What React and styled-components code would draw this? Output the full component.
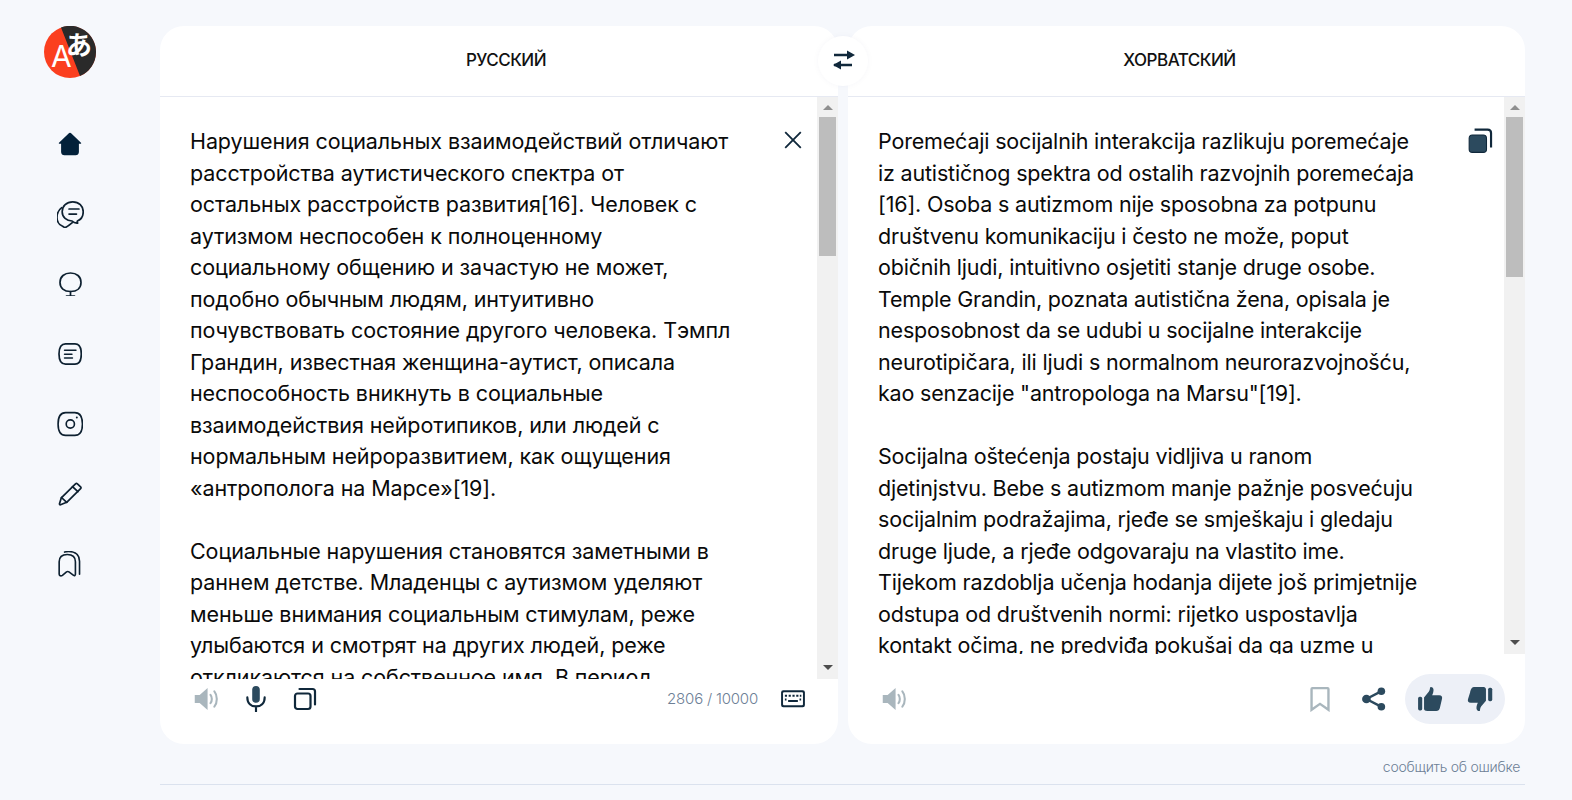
import styled, { createGlobalStyle } from "styled-components";

const NAVY = "#10283b";
const SLATE = "#2c4a5e";
const MUTED = "#a9b6bd";

const GlobalStyle = createGlobalStyle`
  html, body {
    margin: 0;
    height: 100%;
    background: #f6f8fc;
  }
  body {
    font-family: "Inter", "Noto Sans", sans-serif;
    color: #0a0a0a;
  }
`;

const SOURCE_TEXT = [
  [
    "Нарушения социальных взаимодействий отличают",
    "расстройства аутистического спектра от",
    "остальных расстройств развития[16]. Человек с",
    "аутизмом неспособен к полноценному",
    "социальному общению и зачастую не может,",
    "подобно обычным людям, интуитивно",
    "почувствовать состояние другого человека. Тэмпл",
    "Грандин, известная женщина-аутист, описала",
    "неспособность вникнуть в социальные",
    "взаимодействия нейротипиков, или людей с",
    "нормальным нейроразвитием, как ощущения",
    "«антрополога на Марсе»[19].",
  ],
  [
    "Социальные нарушения становятся заметными в",
    "раннем детстве. Младенцы с аутизмом уделяют",
    "меньше внимания социальным стимулам, реже",
    "улыбаются и смотрят на других людей, реже",
    "откликаются на собственное имя. В период",
  ],
];

const TARGET_TEXT = [
  [
    "Poremećaji socijalnih interakcija razlikuju poremećaje",
    "iz autističnog spektra od ostalih razvojnih poremećaja",
    "[16]. Osoba s autizmom nije sposobna za potpunu",
    "društvenu komunikaciju i često ne može, poput",
    "običnih ljudi, intuitivno osjetiti stanje druge osobe.",
    "Temple Grandin, poznata autistična žena, opisala je",
    "nesposobnost da se udubi u socijalne interakcije",
    "neurotipičara, ili ljudi s normalnom neurorazvojnošću,",
    'kao senzacije "antropologa na Marsu"[19].',
  ],
  [
    "Socijalna oštećenja postaju vidljiva u ranom",
    "djetinjstvu. Bebe s autizmom manje pažnje posvećuju",
    "socijalnim podražajima, rjeđe se smješkaju i gledaju",
    "druge ljude, a rjeđe odgovaraju na vlastito ime.",
    "Tijekom razdoblja učenja hodanja dijete još primjetnije",
    "odstupa od društvenih normi: rijetko uspostavlja",
    "kontakt očima, ne predviđa pokušaj da ga uzme u",
  ],
];

const Svg = ({ size = 24, children, ...rest }) => (
  <svg width={size} height={size} viewBox="0 0 24 24" fill="none" {...rest}>
    {children}
  </svg>
);

const line = { stroke: "#0d2030", strokeWidth: 1.7, strokeLinecap: "round", strokeLinejoin: "round" };

const Logo = () => (
  <svg width="52" height="52" viewBox="0 0 52 52">
    <circle cx="26" cy="26" r="26" fill="#fb3f1f" />
    <path d="M17 1.500A26 26 0 0 1 52 26A26 26 0 0 1 36 50Z" fill="#2a2a2a" />
    <text x="7" y="41" fontFamily="Inter" fontSize="30" fill="#fff">A</text>
    <text x="22" y="29" fontFamily="'Noto Sans CJK JP'" fontSize="26" fontWeight="700" fill="#fff">あ</text>
  </svg>
);

const HomeIcon = () => (
  <Svg>
    <path d="M12 .8c.5 0 1 .2 1.400.6l9.600 9.300c.4.4.1 1-.4 1h-1.700v8.200c0 2-1.400 3.300-3.300 3.300H6.400c-1.900 0-3.300-1.300-3.300-3.300v-8.200H1.400c-.5 0-.8-.6-.4-1l9.600-9.300c.4-.4.9-.6 1.400-.6Z" fill="#03213a" />
  </Svg>
);

const ChatIcon = () => (
  <Svg size={27}>
    <path d="M14 .8c5.500 0 9.300 3.600 9.300 8.800 0 4-2.200 7-5.200 8.200-.3.7-.2 1.200.3 1.800-2 .2-3.800-.5-5-1.800C8.500 17.500 4.600 14.500 4.600 9.600 4.600 4.400 8.500.8 14 .8Z" {...line} strokeWidth="1.500" />
    <path d="M10.700 7.100h8.800M10.700 11.600h6.600" {...line} strokeWidth="1.500" />
    <path d="M4.200 5.900C1.500 7.800 0 11 0 14.800c0 3.600 2.200 6.500 5 7.700l2 1.200c2.200-.6 4.400-2.500 6.600-4.400" {...line} strokeWidth="1.500" />
  </Svg>
);

const BulbIcon = () => (
  <Svg>
    <path d="M12.500 1C18.500 1 23 4.500 23 10.500c0 5.500-4 9-10.500 9S2 16 2 10.500C2 4.500 6.500 1 12.500 1Z" {...line} />
    <path d="M12.500 19.500V24M8.500 24h8" {...line} />
  </Svg>
);

const NoteIcon = () => (
  <Svg>
    <path d="M7.500 1.800h9.500C21 1.800 23.300 5 23.300 12c0 7-2.300 10.200-6.300 10.200H7.500C3.500 22.200 1 19 1 12S3.500 1.800 7.500 1.800Z" {...line} />
    <path d="M6.500 8.200h11.500M6.500 12.200h7.500M6.500 16h8" {...line} strokeWidth="1.400" />
  </Svg>
);

const CameraIcon = () => (
  <Svg size={26}>
    <path d="M8 1.500h8.500c4.500 0 7 3.500 7 10.500s-2.500 10.500-7 10.500H8C3.500 22.500 1 19 1 12S3.500 1.500 8 1.500Z" {...line} strokeWidth="1.500" />
    <circle cx="12.300" cy="12" r="3.800" {...line} strokeWidth="1.500" />
    <circle cx="18.300" cy="6" r=".9" fill="#0d2030" />
  </Svg>
);

const PencilIcon = () => (
  <Svg>
    <path d="M17.500 1.800c.6-.5 1.300-.5 1.900 0l3.200 3c.6.6.6 1.300 0 1.900L8.700 20.300 2.500 22.800c-.6.2-1.200-.3-1-1l1.800-6L17.500 1.800Z" {...line} />
    <path d="M3.500 15.500l5.200 4.800M14.500 4.600l5.400 5" {...line} />
  </Svg>
);

const StackIcon = () => (
  <Svg size={26}>
    <path d="M3.500 23c-.7 0-1.500-.4-1.500-1.500V10C2 5.500 5 3.200 9.500 3.200S17 5.500 17 10v11.500c0 1-.8 1.500-1.700 1l-4.300-3.200c-.7-.5-1.500-.5-2.200 0l-3.800 3.200c-.4.3-.9.500-1.500.5Z" {...line} strokeWidth="1.500" />
    <path d="M7 1c1-.3 2-.5 3.500-.5 6.500 0 10.300 3.200 10.300 9v12" {...line} strokeWidth="1.500" />
  </Svg>
);

const SwapIcon = () => (
  <Svg>
    <path d="M2 7h18M2 17h18" stroke={NAVY} strokeWidth="2.400" />
    <path d="M15 2.500 23 7l-8 4.500ZM9 12.500 1 17l8 4.500Z" fill={NAVY} />
  </Svg>
);

const CloseIcon = () => (
  <Svg size={22}>
    <path d="M3.500 3.500l17 17M20.500 3.500l-17 17" stroke={NAVY} strokeWidth="2" />
  </Svg>
);

const SpeakerIcon = () => (
  <Svg size={28}>
    <path d="M1.500 8.500h4.200L12.500 2.500v19l-6.800-6H1.500Z" fill={MUTED} />
    <path d="M15 8.500c1.500 1.800 1.500 5.200 0 7M18.300 5.500c2.800 3.300 2.800 9.700 0 13" stroke={MUTED} strokeWidth="1.800" strokeLinecap="round" />
  </Svg>
);

const MicIcon = () => (
  <Svg size={26}>
    <rect x="8.500" y="0" width="7" height="15.500" rx="3.500" fill={SLATE} />
    <path d="M4 10.500c0 5.500 3.500 8.300 8 8.300s8-2.800 8-8.300M12 19v4.500" stroke={NAVY} strokeWidth="2" strokeLinecap="round" />
  </Svg>
);

const CopyIcon = () => (
  <Svg size={24}>
    <rect x="2" y="6.500" width="15.500" height="15.500" rx="2.500" stroke={NAVY} strokeWidth="2.200" />
    <path d="M6.500 2h13c1.400 0 2.500 1.100 2.500 2.500v13" stroke={NAVY} strokeWidth="2.200" strokeLinecap="round" />
  </Svg>
);

const CopyFilledIcon = () => (
  <Svg size={26}>
    <rect x="2" y="6.500" width="16" height="16" rx="3" fill={SLATE} stroke={NAVY} strokeWidth="1" />
    <path d="M7 1.500h12c1.900 0 3.200 1.300 3.200 3.200V18" stroke={NAVY} strokeWidth="2" />
  </Svg>
);

const KeyboardIcon = () => (
  <Svg size={26}>
    <rect x="1" y="4" width="22" height="15.500" rx="2" fill={NAVY} />
    <rect x="2.800" y="5.800" width="18.400" height="11.900" rx=".8" fill="#fff" />
    <path d="M4.500 9h2M8 9h2M11.500 9h2M15 9h2M18.300 9h1.400M4.500 12.500h1.500M18 12.500h1.500M7.500 13.800h9" stroke={NAVY} strokeWidth="1.800" />
  </Svg>
);

const BookmarkIcon = () => (
  <Svg size={26}>
    <path d="M5 2h14c.4 0 .8.400.8.800V22l-7.800-5.500L4.200 22V2.800c0-.4.400-.8.800-.8Z" stroke={MUTED} strokeWidth="2.200" />
  </Svg>
);

const ShareIcon = () => (
  <Svg size={26}>
    <path d="M18.500 5 5 12l13.500 7" stroke={SLATE} strokeWidth="2.200" />
    <circle cx="18.800" cy="4.800" r="3.500" fill={SLATE} />
    <circle cx="18.800" cy="19.200" r="3.500" fill={SLATE} />
    <circle cx="5" cy="12" r="4" fill={SLATE} />
  </Svg>
);

const ThumbUp = () => (
  <Svg size={26}>
    <rect x="1" y="10" width="3.800" height="12.500" rx="1.500" fill={SLATE} />
    <path d="M6.500 21V10.500l4.500-5.500c.5-1 1-2.200 1-3.500 0-1 2.800-1 3.200 1.500.3 2-.6 4-1.200 5.500h6.500c2.200 0 3.100 1.500 2.600 3.300l-2 8.500c-.4 1.800-1.600 2.700-3.300 2.700h-8.300C7.800 23 6.500 22.500 6.500 21Z" fill={SLATE} />
  </Svg>
);

const ThumbDown = () => (
  <Svg size={26}>
    <rect x="19.500" y="1.500" width="3.800" height="12.500" rx="1.500" fill={SLATE} />
    <path d="M17.500 3v10.500l-4.500 5.500c-.5 1-1 2.200-1 3.500 0 1-2.800 1-3.200-1.500-.3-2 .6-4 1.200-5.500H3.500c-2.200 0-3.100-1.500-2.600-3.300l2-6.500C3.300 3.900 4.500 1 6.200 1h8.300C16.200 1 17.500 1.500 17.500 3Z" fill={SLATE} />
  </Svg>
);

const ArrowUp = styled.span`
  width: 0;
  height: 0;
  border-left: 5px solid transparent;
  border-right: 5px solid transparent;
  border-bottom: 5px solid #8f8f8f;
`;

const ArrowDown = styled.span`
  width: 0;
  height: 0;
  margin-bottom: 4px;
  border-left: 5px solid transparent;
  border-right: 5px solid transparent;
  border-top: 5px solid #4d4d4d;
`;

const Page = styled.div`
  display: grid;
  grid-template-columns: 160px 1fr;
  width: 1572px;
  height: 800px;
  overflow: hidden;
`;

const Sidebar = styled.nav`
  display: flex;
  flex-direction: column;
  align-items: center;
  padding-top: 26px;
  width: 140px;
`;

const LogoWrap = styled.div`
  height: 52px;
  margin-bottom: 31px;
`;

const NavItem = styled.a`
  display: flex;
  align-items: center;
  justify-content: center;
  height: 70px;
  width: 70px;
`;

const Main = styled.main`
  display: flex;
  flex-direction: column;
  padding: 26px 47px 0 0;
`;

const Panels = styled.div`
  position: relative;
  display: flex;
  gap: 10px;
  height: 718px;
`;

const Panel = styled.section`
  display: flex;
  flex-direction: column;
  flex: ${(p) => p.$width}px 0 0;
  width: ${(p) => p.$width}px;
  background: #fff;
  border-radius: 24px;
  overflow: hidden;
`;

const PanelHeader = styled.header`
  display: flex;
  align-items: center;
  justify-content: center;
  height: 68px;
  flex: none;
  padding: ${(p) => (p.$side === "left" ? "0 0 2px 14px" : "0 14px 2px 0")};
  border-bottom: 1px solid #e6e9f2;
  font-size: 17px;
  font-weight: 500;
  letter-spacing: -0.5px;
  color: #111;
`;

const PanelBody = styled.div`
  display: flex;
  height: ${(p) => p.$height}px;
  flex: none;
`;

const TextArea = styled.div`
  position: relative;
  flex: 1;
  min-width: 0;
  overflow: hidden;
  padding: 29px 0 0 30px;
  letter-spacing: ${(p) => p.$tracking}px;
`;

const Paragraph = styled.p`
  margin: 0 0 31.500px;
  font-size: 21.500px;
  line-height: 31.500px;
`;

const TextLine = styled.span`
  display: block;
  white-space: nowrap;
`;

const CornerAction = styled.button`
  position: absolute;
  top: ${(p) => p.$top}px;
  right: ${(p) => p.$right}px;
  display: flex;
  padding: 0;
  border: 0;
  background: none;
`;

const Scrollbar = styled.div`
  display: flex;
  flex-direction: column;
  align-items: center;
  flex: none;
  width: 21px;
  background: #f1f1f1;
`;

const ScrollButton = styled.div`
  display: flex;
  align-items: center;
  justify-content: center;
  flex: none;
  height: 20px;
`;

const ScrollThumb = styled.div`
  flex: none;
  width: 17px;
  height: ${(p) => p.$height}px;
  background: #bdbdbd;
`;

const ScrollSpacer = styled.div`
  flex: 1;
`;

const PanelFooter = styled.footer`
  display: flex;
  align-items: flex-start;
  padding: ${(p) => p.$top}px 20px 0 ${(p) => p.$left}px;
`;

const IconSlot = styled.button`
  display: flex;
  align-items: center;
  justify-content: center;
  flex: none;
  width: ${(p) => p.$width || 50}px;
  height: ${(p) => p.$height || 40}px;
  margin-right: ${(p) => p.$after || 0}px;
  padding: 0;
  border: 0;
  background: none;
`;

const Push = styled.div`
  flex: 1;
`;

const Counter = styled.span`
  height: 40px;
  margin-right: 10px;
  font-size: 15px;
  font-weight: 300;
  line-height: 39px;
  letter-spacing: -0.2px;
  color: #6d8096;
`;

const RatePill = styled.div`
  display: flex;
  align-items: center;
  justify-content: space-between;
  flex: none;
  width: 100px;
  height: 50px;
  margin-left: 6px;
  background: #edf0f7;
  border-radius: 25px;
`;

const SwapButton = styled.button`
  position: absolute;
  left: 658px;
  top: 10px;
  display: flex;
  align-items: center;
  justify-content: center;
  width: 50px;
  height: 50px;
  padding: 0 0 2px 2px;
  border: 0;
  border-radius: 50%;
  background: #fff;
  box-shadow: 0 0 6px rgba(30, 50, 90, 0.04);
`;

const PageFooter = styled.div`
  display: flex;
  justify-content: flex-end;
  height: 40px;
  padding-right: 5px;
  border-bottom: 1px solid #dbe2ee;
  font-size: 14px;
  font-weight: 300;
  line-height: 46px;
  letter-spacing: -0.25px;
  color: #6d8096;
`;

const NAV_ICONS = [HomeIcon, ChatIcon, BulbIcon, NoteIcon, CameraIcon, PencilIcon, StackIcon];

function Text({ paragraphs }) {
  return paragraphs.map((lines) => (
    <Paragraph key={lines[0]}>
      {lines.map((text) => (
        <TextLine key={text}>{text}</TextLine>
      ))}
    </Paragraph>
  ));
}

function FakeScrollbar({ thumb }) {
  return (
    <Scrollbar>
      <ScrollButton>
        <ArrowUp />
      </ScrollButton>
      <ScrollThumb $height={thumb} />
      <ScrollSpacer />
      <ScrollButton>
        <ArrowDown />
      </ScrollButton>
    </Scrollbar>
  );
}

export default function App() {
  return (
    <>
      <GlobalStyle />
      <Page>
        <Sidebar>
          <LogoWrap>
            <Logo />
          </LogoWrap>
          {NAV_ICONS.map((Icon, i) => (
            <NavItem key={i}>
              <Icon />
            </NavItem>
          ))}
        </Sidebar>
        <Main>
          <Panels>
            <Panel $width={678}>
              <PanelHeader $side="left">РУССКИЙ</PanelHeader>
              <PanelBody $height={582}>
                <TextArea $tracking={-0.1}>
                  <Text paragraphs={SOURCE_TEXT} />
                  <CornerAction $top={32} $right={13}>
                    <CloseIcon />
                  </CornerAction>
                </TextArea>
                <FakeScrollbar thumb={139} />
              </PanelBody>
              <PanelFooter $top={0} $left={22}>
                <IconSlot $width={49}>
                  <SpeakerIcon />
                </IconSlot>
                <IconSlot $width={49}>
                  <MicIcon />
                </IconSlot>
                <IconSlot $width={49}>
                  <CopyIcon />
                </IconSlot>
                <Push />
                <Counter>2806 / 10000</Counter>
                <IconSlot>
                  <KeyboardIcon />
                </IconSlot>
              </PanelFooter>
            </Panel>
            <Panel $width={677}>
              <PanelHeader $side="right">ХОРВАТСКИЙ</PanelHeader>
              <PanelBody $height={557}>
                <TextArea $tracking={-0.18}>
                  <Text paragraphs={TARGET_TEXT} />
                  <CornerAction $top={31} $right={11}>
                    <CopyFilledIcon />
                  </CornerAction>
                </TextArea>
                <FakeScrollbar thumb={160} />
              </PanelBody>
              <PanelFooter $top={20} $left={22}>
                <IconSlot $height={50}>
                  <SpeakerIcon />
                </IconSlot>
                <Push />
                <IconSlot $height={50} $after={4}>
                  <BookmarkIcon />
                </IconSlot>
                <IconSlot $height={50}>
                  <ShareIcon />
                </IconSlot>
                <RatePill>
                  <IconSlot $height={50}>
                    <ThumbUp />
                  </IconSlot>
                  <IconSlot $height={50}>
                    <ThumbDown />
                  </IconSlot>
                </RatePill>
              </PanelFooter>
            </Panel>
            <SwapButton>
              <SwapIcon />
            </SwapButton>
          </Panels>
          <PageFooter>сообщить об ошибке</PageFooter>
        </Main>
      </Page>
    </>
  );
}
